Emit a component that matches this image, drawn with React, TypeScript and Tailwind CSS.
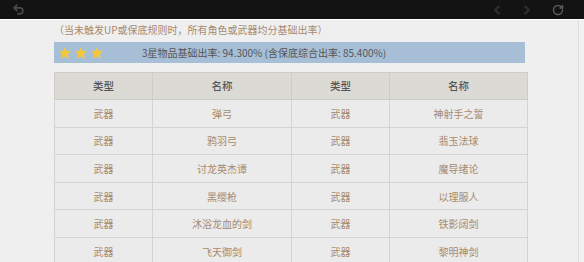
import { Undo2, RotateCw, ChevronLeft, ChevronRight } from "lucide-react";

const rows: [string, string, string, string][] = [
  ["武器", "弹弓", "武器", "神射手之誓"],
  ["武器", "鸦羽弓", "武器", "翡玉法球"],
  ["武器", "讨龙英杰谭", "武器", "魔导绪论"],
  ["武器", "黑缨枪", "武器", "以理服人"],
  ["武器", "沐浴龙血的剑", "武器", "铁影阔剑"],
  ["武器", "飞天御剑", "武器", "黎明神剑"],
];

function Star() {
  return (
    <svg width="14" height="14" viewBox="0 0 24 24" aria-hidden>
      <path
        d="M12 1.8l3.1 6.6 7.2.9-5.3 5 1.4 7.1L12 17.9l-6.4 3.5L7 14.3l-5.3-5 7.2-.9z"
        fill="#f4c73c"
      />
    </svg>
  );
}

export default function App() {
  return (
    <div
      className="flex h-[262px] w-[584px] flex-col overflow-hidden bg-[#efefef]"
      style={{ fontFamily: '"Noto Sans CJK SC", "Liberation Sans", sans-serif' }}
    >
      <div className="flex h-[19px] shrink-0 items-center bg-[#131313] px-[12px] text-[#4a4a4a]">
        <Undo2 size={13} strokeWidth={3} />
        <div className="ml-auto flex items-center gap-[16px] pr-[8px]">
          <ChevronLeft size={14} strokeWidth={4} className="text-[#2e2e2e]" />
          <ChevronRight size={14} strokeWidth={4} className="text-[#2e2e2e]" />
          <RotateCw size={12} strokeWidth={3} className="ml-[2px] text-[#5a5a5a]" />
        </div>
      </div>
      <div className="h-px shrink-0 bg-white" />

      <div className="flex min-h-0 flex-1">
        <div className="flex-1 pl-[54px] pr-[50px]">
          <p className="mt-[1px] h-[17px] text-[10px] leading-[17px] text-[#a78a6d]">
            （当未触发UP或保底规则时，所有角色或武器均分基础出率）
          </p>
          <div className="mt-[4px] flex h-[21px] w-[471px] items-center bg-[#a7bfd6]">
            <div className="ml-[4px] flex gap-[2px]">
              <Star />
              <Star />
              <Star />
            </div>
            <span className="ml-[38px] text-[10px] text-[#555]">
              3星物品基础出率: 94.300% (含保底综合出率: 85.400%)
            </span>
          </div>

          <table className="mt-[9px] w-[473px] table-fixed border-collapse text-[10px]">
            <colgroup>
              <col className="w-[98px]" />
              <col className="w-[139px]" />
              <col className="w-[98px]" />
              <col className="w-[138px]" />
            </colgroup>
            <thead>
              <tr className="h-[27px] bg-[#dcdad5] text-[10.5px] text-[#555]">
                {["类型", "名称", "类型", "名称"].map((h, i) => (
                  <th key={i} className="border border-[#cfccc7] font-medium">
                    {h}
                  </th>
                ))}
              </tr>
            </thead>
            <tbody>
              {rows.map((r, i) => (
                <tr key={i} className="h-[27.6px] bg-[#ebebeb] text-[#a78a6d]">
                  {r.map((c, j) => (
                    <td key={j} className="border border-[#d3d3d3] text-center">
                      {c}
                    </td>
                  ))}
                </tr>
              ))}
            </tbody>
          </table>
        </div>
        <div className="w-[7px] shrink-0 border-l border-[#dedede] bg-[#f2f2f2]" />
      </div>
    </div>
  );
}
